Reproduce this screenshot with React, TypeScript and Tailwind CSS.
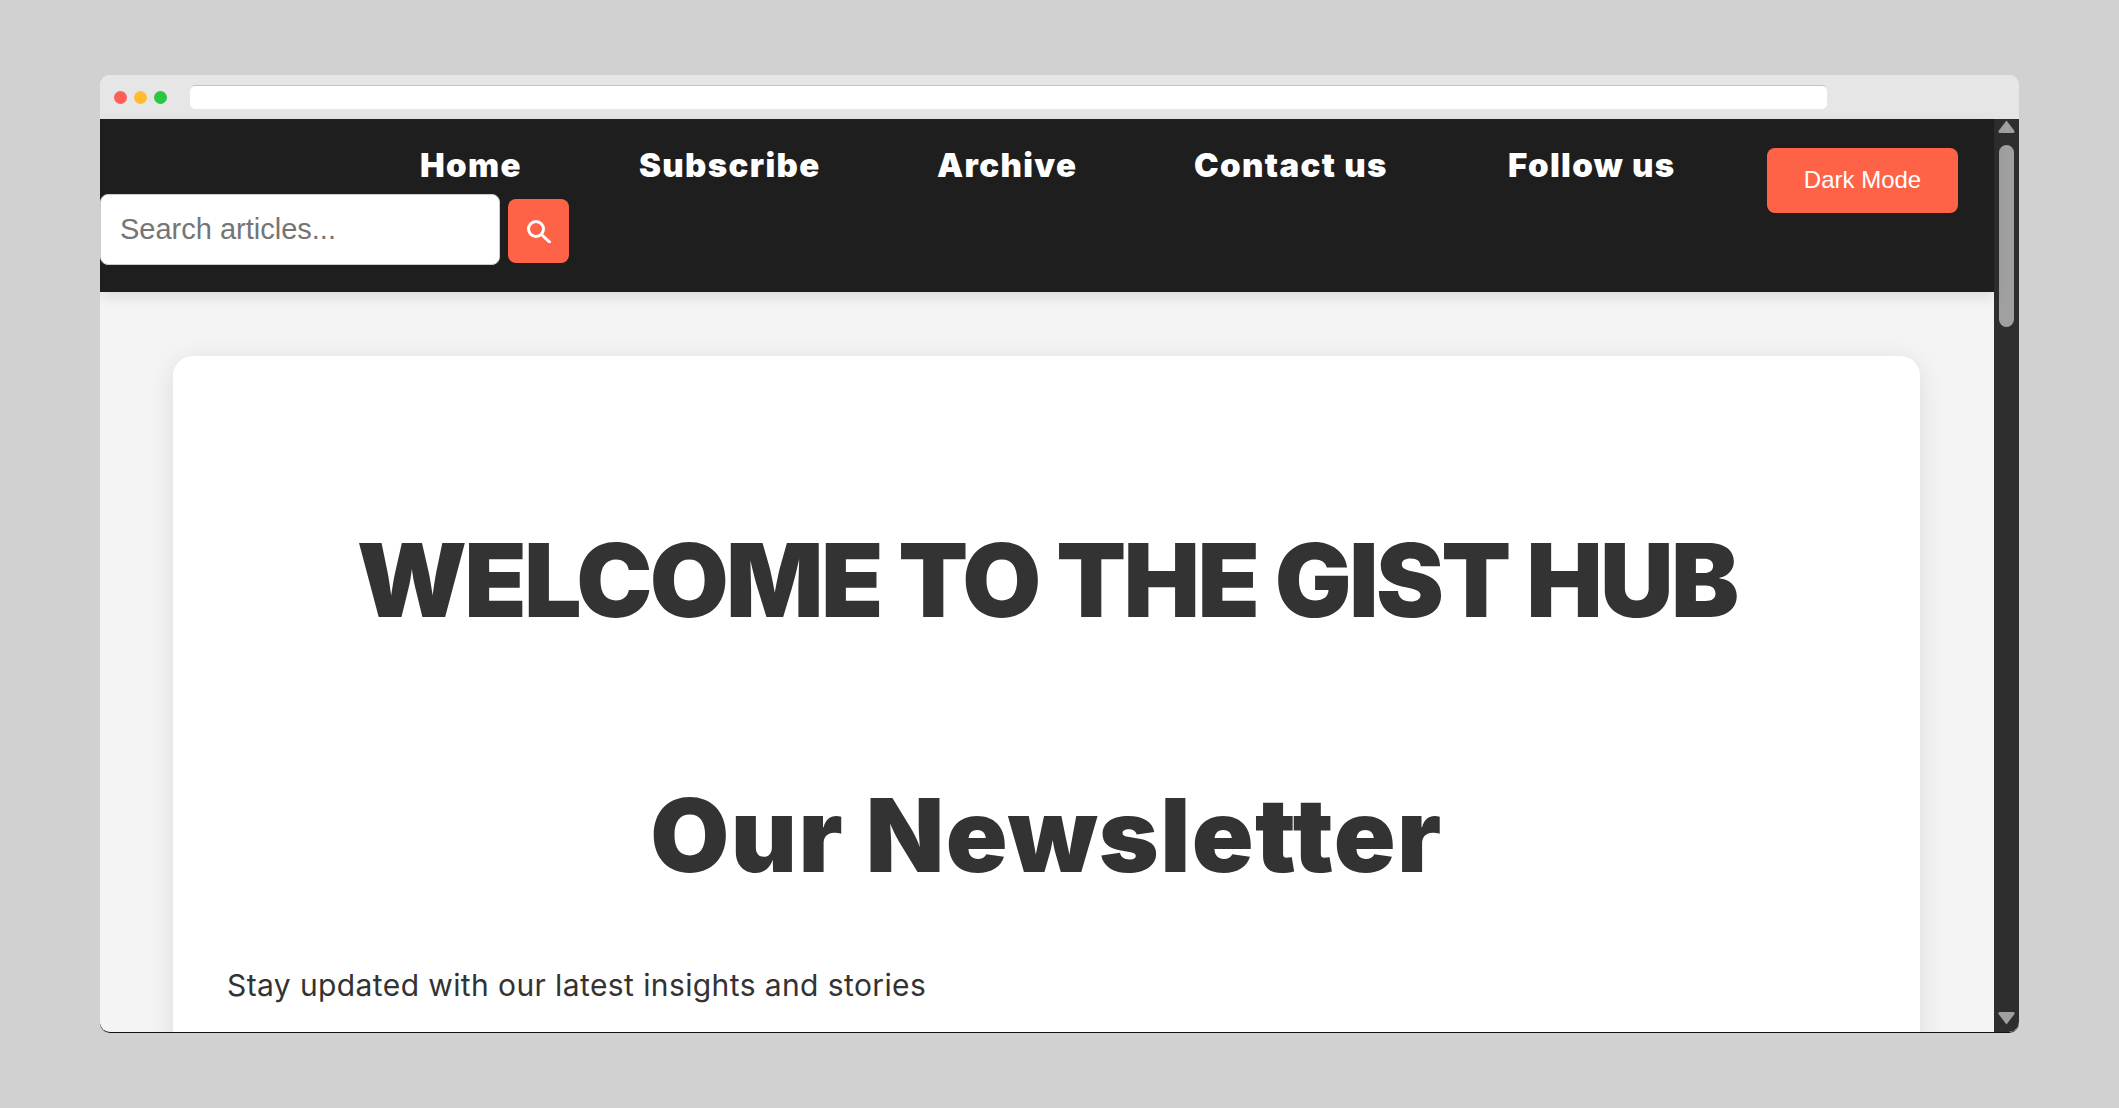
const links = [
  { label: 'Home', width: 'w-[101px]' },
  { label: 'Subscribe', width: 'w-[180px]' },
  { label: 'Archive', width: 'w-[139px]' },
  { label: 'Contact us', width: 'w-[196px]' },
  { label: 'Follow us', width: 'w-[166px]' },
];

function Scrollbar() {
  return (
    <div className="flex w-[25px] shrink-0 flex-col items-center bg-[#2e2e2e] rounded-br-[10px]">
      <svg viewBox="0 0 17 13" className="mt-px h-[13px] w-[17px] fill-[#a0a0a0]">
        <path d="M8.5 0.5 L16.5 11 Q17 13 15 13 L2 13 Q0 13 0.5 11 Z" />
      </svg>
      <div className="mt-3 h-[182px] w-[15px] rounded-full bg-[#a0a0a0]" />
      <svg viewBox="0 0 17 13" className="mt-auto mb-[7px] h-[13px] w-[17px] fill-[#a0a0a0]">
        <path d="M8.5 12.5 L16.5 2 Q17 0 15 0 L2 0 Q0 0 0.5 2 Z" />
      </svg>
    </div>
  );
}

function Navbar() {
  return (
    <nav className="relative z-10 flex h-[173px] shrink-0 bg-[#1e1e1e] shadow-[0_5px_14px_rgba(0,0,0,0.1)]">
      <div className="flex flex-1 flex-col">
        <ul className="mt-[18px] flex h-[57px] items-center gap-[118px] pl-[320px] font-['Inter',sans-serif] text-[33px] font-black tracking-[1.35px] text-white">
          {links.map((link) => (
            <li key={link.label} className={`whitespace-nowrap ${link.width}`}>
              {link.label}
            </li>
          ))}
        </ul>
        <div className="flex items-start gap-2">
          <input
            placeholder="Search articles..."
            className="h-[71px] w-[400px] rounded-lg border border-[#cccccc] bg-white px-[19px] font-['Liberation_Sans',sans-serif] text-[29px] text-[#333333] outline-none placeholder:text-[#757575]"
          />
          <button className="mt-[5px] flex h-[64px] w-[61px] items-center justify-center rounded-lg bg-[#ff6347] text-white">
            <svg viewBox="0 0 25 24" className="h-6 w-[25px] fill-none stroke-white stroke-[3px]">
              <circle cx="10" cy="10" r="7.5" />
              <path d="M15.5 15.5 L23.5 23" strokeLinecap="round" />
            </svg>
          </button>
        </div>
      </div>
      <button className="mt-[29px] mr-[36px] h-[65px] w-[191px] rounded-lg bg-[#ff6347] pb-0.5 font-['Liberation_Sans',sans-serif] text-2xl text-white">
        Dark Mode
      </button>
    </nav>
  );
}

export default function App() {
  return (
    <div className="flex h-[1108px] w-[2119px] overflow-hidden bg-[#d1d1d1] pt-[75px] pr-[100px] pb-[75px] pl-[100px]">
      <div className="flex h-[958px] w-[1919px] flex-col overflow-hidden rounded-[10px] border-b border-[#111111] bg-[#f4f4f4]">
        <div className="flex h-11 shrink-0 items-center bg-[#e6e6e6] pl-[14px]">
          <div className="flex gap-[7px]">
            <span className="h-[13px] w-[13px] rounded-full bg-[#ff5f57]" />
            <span className="h-[13px] w-[13px] rounded-full bg-[#ffbd2e]" />
            <span className="h-[13px] w-[13px] rounded-full bg-[#28c840]" />
          </div>
          <div className="ml-[23px] h-6 w-[1637px] rounded-[5px] border-t border-[#c4c4c4] bg-white" />
        </div>
        <div className="flex min-h-0 flex-1">
          <div className="flex min-w-0 flex-1 flex-col">
            <Navbar />
            <main className="min-h-0 flex-1 pt-[64px] pr-[74px] pl-[73px]">
              <div className="h-[800px] rounded-[20px] bg-white px-[54px] pt-[160px] shadow-[0_5px_27px_rgba(0,0,0,0.1)]">
                <h1 className="text-center font-['Inter',sans-serif] text-[102px] leading-[128px] font-black tracking-[-2.7px] text-[#333333]">
                  WELCOME TO THE GIST HUB
                </h1>
                <h2 className="mt-[127px] text-center font-['Inter',sans-serif] text-[102px] leading-[128px] font-black tracking-[1.4px] text-[#333333]">
                  Our Newsletter
                </h2>
                <p className="mt-[64px] font-['Inter',sans-serif] text-[30px] leading-[45px] tracking-[0.4px] text-[#333333]">
                  Stay updated with our latest insights and stories
                </p>
              </div>
            </main>
          </div>
          <Scrollbar />
        </div>
      </div>
    </div>
  );
}
